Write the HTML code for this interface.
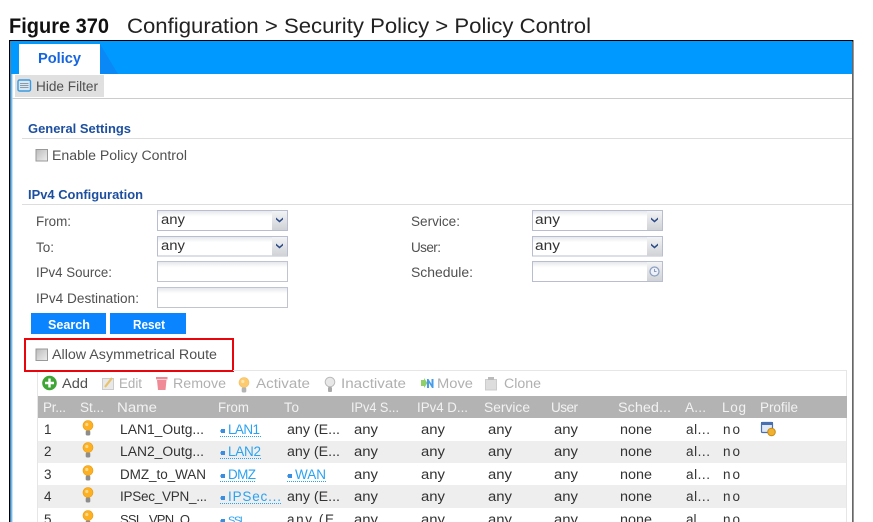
<!DOCTYPE html>
<html><head><meta charset="utf-8"><style>
html,body{margin:0;padding:0;background:#fff;width:873px;height:522px;overflow:hidden}
svg{display:block}
text{font-family:"Liberation Sans",sans-serif;font-size:13.5px;fill:#505050}
.t{fill:#333}.g{fill:#b0b0b0}.h{fill:#f2f2f2}.b{fill:#2aa2f2}
.s{font-weight:bold;fill:#1d4f9e;font-size:13px}
</style></head><body>
<svg width="873" height="522" viewBox="0 0 873 522" xmlns="http://www.w3.org/2000/svg">
<defs>
<linearGradient id="sel" x1="0" y1="0" x2="0" y2="1"><stop offset="0" stop-color="#e4e6ea"/><stop offset=".3" stop-color="#fff"/></linearGradient>
<linearGradient id="btn" x1="0" y1="0" x2="0" y2="1"><stop offset="0" stop-color="#f2f3f5"/><stop offset="1" stop-color="#cfd2d6"/></linearGradient>
<linearGradient id="cb" x1="0" y1="0" x2="1" y2="1"><stop offset="0" stop-color="#bbb"/><stop offset="1" stop-color="#eee"/></linearGradient>
<g id="bulb"><circle cx="0" cy="-2.500" r="5" fill="#fdb022" stroke="#e89a10" stroke-width=".6"/><circle cx="-1.200" cy="-3.500" r="1.600" fill="#ffd98a"/><rect x="-2.300" y="2.500" width="4.600" height="5" rx="1.200" fill="#8d8d8d"/></g>
<g id="lnk"><rect x="0" y="0" width="4" height="4" fill="#3a8ee0"/><rect x="-1" y="1" width="1" height="2" fill="#8cc0f0"/></g>
<g id="arr"><rect x="0" y="0" width="15" height="19" fill="url(#btn)"/><path d="M4 6.500l3.500 3 3.500-3v2l-3.500 3-3.500-3z" fill="#2b4a85"/></g>
</defs>

<!-- caption -->
<text x="9" y="33" textLength="100" lengthAdjust="spacingAndGlyphs" style="font-size:21px;font-weight:bold;fill:#111">Figure 370</text>
<text x="127" y="33" textLength="464" lengthAdjust="spacingAndGlyphs" style="font-size:21px;fill:#222">Configuration &gt; Security Policy &gt; Policy Control</text>

<!-- frame -->
<rect x="9" y="40" width="844" height="1.400" fill="#000"/>
<rect x="9" y="40" width="1.400" height="482" fill="#000"/>
<rect x="852.400" y="40" width="1" height="482" fill="#000"/>
<rect x="10.400" y="41" width="2" height="481" fill="#6cbcf2"/>
<rect x="11" y="41" width="841" height="33" fill="#0099ff"/>
<path d="M100 44L118 74H100z" fill="#0a88f6"/>
<rect x="19" y="44" width="81" height="30" fill="#fff"/>
<text x="38" y="63" textLength="43" lengthAdjust="spacingAndGlyphs" style="font-size:15px;font-weight:bold;fill:#1565e0">Policy</text>

<!-- hide filter -->
<rect x="15" y="75" width="89" height="22" fill="#e0e0e0"/>
<rect x="18" y="80" width="12.500" height="11" rx="1.500" fill="#d8e6f2" stroke="#3a9be0" stroke-width="1.400"/>
<path d="M20 83.500h8.500M20 85.500h8.500M20 87.500h8.500" stroke="#8a9aa8" stroke-width="1"/>
<text x="36" y="91" textLength="62" lengthAdjust="spacingAndGlyphs">Hide Filter</text>
<rect x="12" y="98" width="840" height="1" fill="#ccc"/>

<!-- general -->
<text class="s" x="28" y="133" textLength="103" lengthAdjust="spacingAndGlyphs">General Settings</text>
<rect x="22" y="138" width="830" height="1" fill="#ddd"/>
<rect x="36" y="149.500" width="11.500" height="11.500" fill="url(#cb)" stroke="#999"/>
<text x="52" y="160" textLength="135" lengthAdjust="spacingAndGlyphs">Enable Policy Control</text>

<!-- ipv4 -->
<text class="s" x="28" y="199" textLength="115" lengthAdjust="spacingAndGlyphs">IPv4 Configuration</text>
<rect x="22" y="204" width="830" height="1" fill="#ddd"/>

<text x="36" y="226" textLength="35" lengthAdjust="spacingAndGlyphs">From:</text>
<text x="36" y="252" textLength="18" lengthAdjust="spacing">To:</text>
<text x="36" y="277" textLength="76" lengthAdjust="spacingAndGlyphs">IPv4 Source:</text>
<text x="36" y="303" textLength="103" lengthAdjust="spacingAndGlyphs">IPv4 Destination:</text>
<text x="411" y="226" textLength="49" lengthAdjust="spacingAndGlyphs">Service:</text>
<text x="411" y="252" textLength="30" lengthAdjust="spacing">User:</text>
<text x="411" y="277" textLength="62" lengthAdjust="spacingAndGlyphs">Schedule:</text>

<rect x="157.500" y="210.500" width="130" height="20" fill="url(#sel)" stroke="#b8bdd0"/>
<use href="#arr" x="272" y="211"/>
<text class="t" x="161" y="224" textLength="24" lengthAdjust="spacingAndGlyphs">any</text>
<rect x="157.500" y="236.500" width="130" height="19.500" fill="url(#sel)" stroke="#b8bdd0"/>
<use href="#arr" x="272" y="237"/>
<text class="t" x="161" y="250" textLength="24" lengthAdjust="spacingAndGlyphs">any</text>
<rect x="157.500" y="261.500" width="130" height="20" fill="url(#sel)" stroke="#c0c4d0"/>
<rect x="157.500" y="287.500" width="130" height="20" fill="url(#sel)" stroke="#c0c4d0"/>

<rect x="532.500" y="210.500" width="130" height="20" fill="url(#sel)" stroke="#b8bdd0"/>
<use href="#arr" x="647" y="211"/>
<text class="t" x="535" y="224" textLength="25" lengthAdjust="spacingAndGlyphs">any</text>
<rect x="532.500" y="236.500" width="130" height="19.500" fill="url(#sel)" stroke="#b8bdd0"/>
<use href="#arr" x="647" y="237"/>
<text class="t" x="535" y="250" textLength="25" lengthAdjust="spacingAndGlyphs">any</text>
<rect x="532.500" y="261.500" width="130" height="20" fill="url(#sel)" stroke="#b8bdd0"/>
<rect x="647" y="262" width="15" height="19" fill="url(#btn)"/>
<circle cx="654.500" cy="271.500" r="4.500" fill="#eef2f8" stroke="#8a9cc0" stroke-width="1.200"/>
<path d="M654.500 269v2.500h2" stroke="#8a9cc0" fill="none"/>

<rect x="31" y="313" width="75" height="21" fill="#0a84ff"/>
<rect x="110" y="313" width="76" height="21" fill="#0a84ff"/>
<text x="48" y="329" textLength="42" lengthAdjust="spacingAndGlyphs" style="font-weight:bold;fill:#fff;font-size:13px">Search</text>
<text x="133" y="329" textLength="32" lengthAdjust="spacingAndGlyphs" style="font-weight:bold;fill:#fff;font-size:13px">Reset</text>

<!-- allow -->
<rect x="25" y="339" width="208" height="32" fill="none" stroke="#e8060c" stroke-width="2"/>
<rect x="36" y="349" width="11.500" height="11.500" fill="url(#cb)" stroke="#999"/>
<text x="52" y="359" textLength="165" lengthAdjust="spacingAndGlyphs">Allow Asymmetrical Route</text>

<!-- table -->
<path d="M37.500 522V372M233 370.500H846.500V522" fill="none" stroke="#e6e6e6"/>
<circle cx="49.500" cy="383" r="7.300" fill="#3fa535"/>
<path d="M45 383h9M49.500 378.500v9" stroke="#fff" stroke-width="2.400"/>
<text x="62" y="388" textLength="26" lengthAdjust="spacingAndGlyphs">Add</text>
<rect x="102.500" y="378.500" width="11" height="11" fill="#e8e8e8" stroke="#ccc"/><path d="M105 387l7-9" stroke="#e8c36a" stroke-width="2.200"/>
<text class="g" x="119" y="388" textLength="23" lengthAdjust="spacingAndGlyphs">Edit</text>
<path d="M157 380h9.500l-1 10h-7.500z" fill="#f08a96"/><rect x="156" y="377" width="11.500" height="2.400" fill="#f08a96"/>
<text class="g" x="173" y="388" textLength="53" lengthAdjust="spacingAndGlyphs">Remove</text>
<use href="#bulb" x="244" y="385" opacity=".65"/>
<text class="g" x="256" y="388" textLength="54" lengthAdjust="spacingAndGlyphs">Activate</text>
<circle cx="330" cy="382" r="4.800" fill="#e8e8e8" stroke="#bbb"/><rect x="328" y="387" width="4" height="5" rx="1" fill="#aaa"/>
<text class="g" x="341" y="388" textLength="65" lengthAdjust="spacingAndGlyphs">Inactivate</text>
<path d="M418 383h3v-3h3v-2l3.500 5-3.500 5v-2h-3v-3h-3z" fill="#8fd06a"/><path d="M427 379v9h2v-5l3 5h1.500v-9h-2v5l-3-5z" fill="#4a9be8"/>
<text class="g" x="437" y="388" textLength="36" lengthAdjust="spacingAndGlyphs">Move</text>
<rect x="485.500" y="379.500" width="11" height="10.500" fill="#ddd" stroke="#ccc"/><rect x="488" y="377" width="6" height="3" fill="#bbb"/>
<text class="g" x="504" y="388" textLength="37" lengthAdjust="spacingAndGlyphs">Clone</text>

<rect x="38" y="396" width="809" height="22" fill="#b3b3b3"/>
<g class="hdr">
<text class="h" x="43" y="412" textLength="23" lengthAdjust="spacing">Pr...</text>
<text class="h" x="80" y="412" textLength="24" lengthAdjust="spacing">St...</text>
<text class="h" x="117" y="412" textLength="40" lengthAdjust="spacingAndGlyphs">Name</text>
<text class="h" x="218" y="412" textLength="31" lengthAdjust="spacingAndGlyphs">From</text>
<text class="h" x="284" y="412" textLength="15" lengthAdjust="spacing">To</text>
<text class="h" x="351" y="412" textLength="48" lengthAdjust="spacingAndGlyphs">IPv4 S...</text>
<text class="h" x="417" y="412" textLength="51" lengthAdjust="spacingAndGlyphs">IPv4 D...</text>
<text class="h" x="484" y="412" textLength="46" lengthAdjust="spacingAndGlyphs">Service</text>
<text class="h" x="551" y="412" textLength="27" lengthAdjust="spacing">User</text>
<text class="h" x="618" y="412" textLength="53" lengthAdjust="spacingAndGlyphs">Sched...</text>
<text class="h" x="685" y="412" textLength="21" lengthAdjust="spacing">A...</text>
<text class="h" x="722" y="412" textLength="24" lengthAdjust="spacing">Log</text>
<text class="h" x="760" y="412" textLength="38" lengthAdjust="spacing">Profile</text>
</g>
<rect x="38" y="441" width="808" height="22" fill="#eee"/>
<rect x="38" y="485" width="808" height="23" fill="#eee"/>

<!-- row 1 -->
<text class="t" x="44" y="434">1</text>
<use href="#bulb" x="88" y="428"/>
<text class="t" x="120" y="434" textLength="84" lengthAdjust="spacingAndGlyphs">LAN1_Outg...</text>
<use href="#lnk" x="221" y="429"/>
<text class="b" x="228" y="434" textLength="32" lengthAdjust="spacing">LAN1</text>
<path d="M220 436.500h41" stroke="#2aa2f2" stroke-dasharray="1 1"/>
<text class="t" x="287" y="434" textLength="53" lengthAdjust="spacingAndGlyphs">any (E...</text>
<text class="t" x="354" y="434" textLength="24" lengthAdjust="spacingAndGlyphs">any</text>
<text class="t" x="421" y="434" textLength="24" lengthAdjust="spacingAndGlyphs">any</text>
<text class="t" x="488" y="434" textLength="24" lengthAdjust="spacingAndGlyphs">any</text>
<text class="t" x="554" y="434" textLength="24" lengthAdjust="spacingAndGlyphs">any</text>
<text class="t" x="620" y="434" textLength="32" lengthAdjust="spacingAndGlyphs">none</text>
<text class="t" x="686" y="434" textLength="24" lengthAdjust="spacing">al...</text>
<text class="t" x="723" y="434" textLength="17" lengthAdjust="spacing">no</text>
<rect x="761.500" y="422.500" width="11" height="10" rx="1" fill="#dfe8f6" stroke="#4a6fb0" stroke-width="1.200"/>
<rect x="761" y="422" width="12" height="3" fill="#4a6fb0"/>
<circle cx="771.500" cy="432" r="3.800" fill="#f0b030" stroke="#c88a10"/>

<!-- row 2 -->
<text class="t" x="44" y="456">2</text>
<use href="#bulb" x="88" y="450"/>
<text class="t" x="120" y="456" textLength="84" lengthAdjust="spacingAndGlyphs">LAN2_Outg...</text>
<use href="#lnk" x="221" y="451"/>
<text class="b" x="228" y="456" textLength="33" lengthAdjust="spacing">LAN2</text>
<path d="M220 458.500h41" stroke="#2aa2f2" stroke-dasharray="1 1"/>
<text class="t" x="287" y="456" textLength="53" lengthAdjust="spacingAndGlyphs">any (E...</text>
<text class="t" x="354" y="456" textLength="24" lengthAdjust="spacingAndGlyphs">any</text>
<text class="t" x="421" y="456" textLength="24" lengthAdjust="spacingAndGlyphs">any</text>
<text class="t" x="488" y="456" textLength="24" lengthAdjust="spacingAndGlyphs">any</text>
<text class="t" x="554" y="456" textLength="24" lengthAdjust="spacingAndGlyphs">any</text>
<text class="t" x="620" y="456" textLength="32" lengthAdjust="spacingAndGlyphs">none</text>
<text class="t" x="686" y="456" textLength="24" lengthAdjust="spacing">al...</text>
<text class="t" x="723" y="456" textLength="17" lengthAdjust="spacing">no</text>

<!-- row 3 -->
<text class="t" x="44" y="479">3</text>
<use href="#bulb" x="88" y="473"/>
<text class="t" x="120" y="479" textLength="86" lengthAdjust="spacing">DMZ_to_WAN</text>
<use href="#lnk" x="221" y="474"/>
<text class="b" x="228" y="479" textLength="28" lengthAdjust="spacing">DMZ</text>
<path d="M220 481.500h36" stroke="#2aa2f2" stroke-dasharray="1 1"/>
<use href="#lnk" x="288" y="474"/>
<text class="b" x="295" y="479" textLength="31" lengthAdjust="spacing">WAN</text>
<path d="M287 481.500h39" stroke="#2aa2f2" stroke-dasharray="1 1"/>
<text class="t" x="354" y="479" textLength="24" lengthAdjust="spacingAndGlyphs">any</text>
<text class="t" x="421" y="479" textLength="24" lengthAdjust="spacingAndGlyphs">any</text>
<text class="t" x="488" y="479" textLength="24" lengthAdjust="spacingAndGlyphs">any</text>
<text class="t" x="554" y="479" textLength="24" lengthAdjust="spacingAndGlyphs">any</text>
<text class="t" x="620" y="479" textLength="32" lengthAdjust="spacingAndGlyphs">none</text>
<text class="t" x="686" y="479" textLength="24" lengthAdjust="spacing">al...</text>
<text class="t" x="723" y="479" textLength="17" lengthAdjust="spacing">no</text>

<!-- row 4 -->
<text class="t" x="44" y="501">4</text>
<use href="#bulb" x="88" y="495"/>
<text class="t" x="120" y="501" textLength="87" lengthAdjust="spacing">IPSec_VPN_...</text>
<use href="#lnk" x="221" y="496"/>
<text class="b" x="228" y="501" textLength="53" lengthAdjust="spacing">IPSec...</text>
<path d="M220 503.500h61" stroke="#2aa2f2" stroke-dasharray="1 1"/>
<text class="t" x="287" y="501" textLength="53" lengthAdjust="spacingAndGlyphs">any (E...</text>
<text class="t" x="354" y="501" textLength="24" lengthAdjust="spacingAndGlyphs">any</text>
<text class="t" x="421" y="501" textLength="24" lengthAdjust="spacingAndGlyphs">any</text>
<text class="t" x="488" y="501" textLength="24" lengthAdjust="spacingAndGlyphs">any</text>
<text class="t" x="554" y="501" textLength="24" lengthAdjust="spacingAndGlyphs">any</text>
<text class="t" x="620" y="501" textLength="32" lengthAdjust="spacingAndGlyphs">none</text>
<text class="t" x="686" y="501" textLength="24" lengthAdjust="spacing">al...</text>
<text class="t" x="723" y="501" textLength="17" lengthAdjust="spacing">no</text>

<!-- row 5 -->
<text class="t" x="44" y="524">5</text>
<use href="#bulb" x="88" y="518"/>
<text class="t" x="120" y="524" textLength="70" lengthAdjust="spacing" style="font-size:13px">SSL_VPN_O</text>
<use href="#lnk" x="221" y="519"/>
<text class="b" x="228" y="524" textLength="18" lengthAdjust="spacing" style="font-size:11px">SSL</text>
<text class="t" x="287" y="524" textLength="47" lengthAdjust="spacing">any (E</text>
<text class="t" x="354" y="524" textLength="24" lengthAdjust="spacingAndGlyphs">any</text>
<text class="t" x="421" y="524" textLength="24" lengthAdjust="spacingAndGlyphs">any</text>
<text class="t" x="488" y="524" textLength="24" lengthAdjust="spacingAndGlyphs">any</text>
<text class="t" x="554" y="524" textLength="24" lengthAdjust="spacingAndGlyphs">any</text>
<text class="t" x="620" y="524" textLength="32" lengthAdjust="spacingAndGlyphs">none</text>
<text class="t" x="686" y="524">al</text>
<text class="t" x="723" y="524" textLength="17" lengthAdjust="spacing">no</text>
</svg>
</body></html>
